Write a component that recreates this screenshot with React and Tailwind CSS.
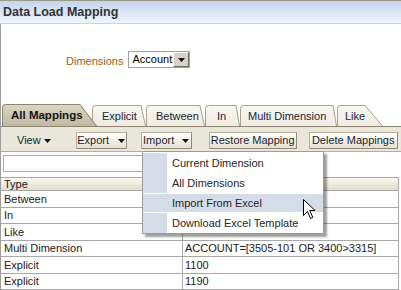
import React from "react";

const Caret = ({ className = "" }) => (
  <svg width="7" height="4" viewBox="0 0 7 4" className={className}>
    <path d="M0 0H7L3.5 4Z" fill="#111" />
  </svg>
);

function Tab({ w, h, slant, label, active, cls, textCls }) {
  const fillId = active ? "tabA" : "tabI";
  return (
    <div className={`relative shrink-0 ${cls}`}>
      <svg className="absolute left-0 top-0" width={w} height={h} viewBox={`0 0 ${w} ${h}`}>
        <defs>
          {active ? (
            <linearGradient id="tabA" x1="0" y1="0" x2="0" y2="1">
              <stop offset="0" stopColor="#dcd6c4" />
              <stop offset="1" stopColor="#c0b8a0" />
            </linearGradient>
          ) : (
            <linearGradient id="tabI" x1="0" y1="0" x2="0" y2="1">
              <stop offset="0" stopColor="#f8f7f2" />
              <stop offset="1" stopColor="#eeebe2" />
            </linearGradient>
          )}
        </defs>
        <path d={`M0 ${h} V3 Q0 0 3 0 H${w - slant} L${w} ${h} Z`} fill={`url(#${fillId})`} />
        <path
          d={`M0.5 ${h} V3.5 Q0.5 0.5 3.5 0.5 H${w - slant} L${w - 0.5} ${h}`}
          fill="none"
          stroke={active ? "#8a8370" : "#a8a18c"}
        />
      </svg>
      <span className={`relative flex h-full items-center pt-[1px] ${textCls}`}>{label}</span>
    </div>
  );
}

const Btn = ({ children, cls = "" }) => (
  <div
    className={`flex h-[17px] items-center justify-center rounded-[1px] border border-[#b3ad9a] border-b-[#8f8977] border-r-[#8f8977] bg-gradient-to-b from-[#ffffff] to-[#e2dfd4] text-[11px] text-[#1c1f2a] ${cls}`}
  >
    {children}
  </div>
);

const rows = [
  ["Between", ""],
  ["In", ""],
  ["Like", ""],
  ["Multi Dimension", "ACCOUNT=[3505-101 OR 3400>3315]"],
  ["Explicit", "1100"],
  ["Explicit", "1190"],
];

const menu = ["Current Dimension", "All Dimensions", "Import From Excel", "Download Excel Template"];

export default function App() {
  return (
    <div className="relative h-[290px] w-[401px] overflow-hidden bg-white font-['Liberation_Sans',Arial,sans-serif] text-[11px] text-[#1a1a1a]">
      {/* Header */}
      <div className="flex h-[24px] items-center border-t border-b border-t-[#9b9a88] border-b-[#d8d2bd] bg-gradient-to-b from-[#c4d4ec] to-[#eff5fc] pl-[3px] text-[12.5px] font-bold text-[#333333]">
        Data Load Mapping
      </div>

      {/* Body */}
      <div className="border-l border-[#9d9d9d]">
        {/* Dimensions selector */}
        <div className="flex h-[80px] items-start pt-[27px]">
          <span className="ml-[65px] mt-[2px] text-[11px] text-[#965f14]">Dimensions</span>
          <div className="ml-[5px] flex h-[17px] w-[62px] items-center border border-[#9aa1a8] bg-white">
            <span className="flex-1 pl-[3px] text-[11px] text-black">Account</span>
            <div className="flex h-[15px] w-[16px] items-center justify-center border border-t-white border-l-white border-b-[#6f6d66] border-r-[#6f6d66] bg-[#d6d2ca]">
              <Caret />
            </div>
          </div>
        </div>

        {/* Tabs */}
        <div className="flex h-[22px] items-end pl-[1px]">
          <Tab w={95} h={22} slant={17} active label="All Mappings" cls="z-10 h-[22px] w-[95px]" textCls="pl-[9px] text-[11.5px] font-bold text-[#151515]" />
          <Tab w={54} h={21} slant={5} label="Explicit" cls="-ml-[5px] h-[21px] w-[54px]" textCls="pl-[10px] text-[#1f2430]" />
          <Tab w={59} h={21} slant={5} label="Between" cls="h-[21px] w-[59px]" textCls="pl-[10px] text-[#1f2430]" />
          <Tab w={35} h={21} slant={4} label="In" cls="h-[21px] w-[35px]" textCls="pl-[12px] text-[#1f2430]" />
          <Tab w={97} h={21} slant={4} label="Multi Dimension" cls="h-[21px] w-[97px]" textCls="pl-[8px] text-[#1f2430]" />
          <Tab w={46} h={21} slant={18} label="Like" cls="h-[21px] w-[46px]" textCls="pl-[8px] text-[#1f2430]" />
        </div>

        {/* Toolbar */}
        <div className="flex h-[26px] items-start border-t border-b border-t-[#8c8672] border-b-[#b4ae9c] bg-[#e9e6da] pt-[5px]">
          <div className="ml-[16px] flex h-[17px] items-center gap-[3px] text-[#1c1f2a]">
            View <Caret />
          </div>
          <Btn cls="ml-[25px] w-[51px] gap-[9px]">
            Export <Caret />
          </Btn>
          <Btn cls="ml-[14px] w-[51px] gap-[8px]">
            Import <Caret />
          </Btn>
          <Btn cls="ml-[17px] w-[88px]">Restore Mapping</Btn>
          <Btn cls="ml-[12px] w-[89px]">Delete Mappings</Btn>
        </div>

        {/* Filter row */}
        <div className="flex h-[25px] items-start pt-[3px]">
          <div className="ml-[2px] h-[17px] w-[140px] border border-[#a2a9b0] bg-white" />
        </div>

        {/* Table */}
        <div className="w-[398px]">
          <div className="flex h-[14px] border-t border-b border-[#a8a8a8] bg-gradient-to-b from-[#faf8f2] to-[#e1dccb]">
            <div className="flex w-[182px] items-center border-r border-[#a8a8a8] pl-[3px] text-[#1a1a1a]">Type</div>
            <div className="flex-1 border-r border-[#a8a8a8]" />
          </div>
          {rows.map(([t, v], i) => (
            <div key={i} className="flex h-[16.5px] border-b border-[#a8a8a8]">
              <div className="flex w-[182px] items-center border-r border-[#a8a8a8] pl-[3px]">{t}</div>
              <div className="flex flex-1 items-center border-r border-[#a8a8a8] pl-[2px]">{v}</div>
            </div>
          ))}
        </div>
      </div>

      {/* Dropdown menu */}
      <div className="absolute left-[142px] top-[151px] w-[182px] border border-[#9c9c9c] bg-white pt-[1px] shadow-[3px_3px_2px_rgba(0,0,0,0.38)]">
        {menu.map((m, i) =>
          i === 2 ? (
            <div key={m} className="flex h-[20px] items-center border-y border-white bg-[#d3dce7]">
              <div className="h-full w-[24px]" />
              <span className="pl-[5px] text-[#262626]">{m}</span>
            </div>
          ) : (
            <div key={m} className="flex h-[20px] items-center">
              <div className="h-full w-[24px] bg-[#d3dce7]" />
              <span className="pl-[5px] text-[#262626]">{m}</span>
            </div>
          )
        )}
      </div>

      {/* Mouse cursor */}
      <svg className="absolute left-[303px] top-[199px]" width="13" height="21" viewBox="0 0 13 21">
        <path d="M0.5 0.5 V16.5 L4.5 12.5 L7.5 19.5 L9.8 18.5 L6.8 11.5 H12 Z" fill="#fff" stroke="#000" strokeWidth="1" strokeLinejoin="miter" />
      </svg>
    </div>
  );
}
